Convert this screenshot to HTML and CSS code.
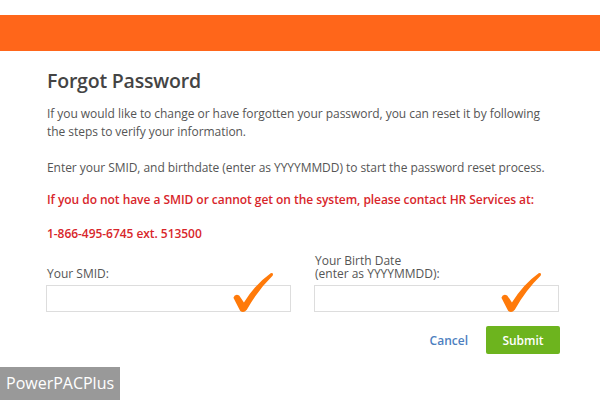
FILE: index.html
```html
<!DOCTYPE html>
<html>
<head>
<meta charset="utf-8">
<link rel="stylesheet" href="styles.css">
</head>
<body>
<div class="topbar"></div>
<main class="panel">
  <h1 class="title">Forgot Password</h1>
  <p class="text">If you would like to change or have forgotten your password, you can reset it by following the steps to verify your information.</p>
  <p class="text">Enter your SMID, and birthdate (enter as YYYYMMDD) to start the password reset process.</p>
  <p class="alert">If you do not have a SMID or cannot get on the system, please contact HR Services at:</p>
  <p class="alert">1-866-495-6745 ext. 513500</p>
  <div class="fields">
    <div class="field">
      <label class="label">Your SMID:</label>
      <div class="inputwrap">
        <input class="input" type="text">
        <svg class="check" viewBox="0 0 44 44"><path d="M1.5,27 Q3,22.5 7.5,24.5 Q10,28 12.5,32 Q24,13 40.5,1.2 Q44,0.5 42.5,4 Q27,19 15.5,39.5 Q12,44 8.5,40.5 Q5,34 1.5,27 Z"/></svg>
      </div>
    </div>
    <div class="field">
      <label class="label">Your Birth Date<br>(enter as YYYYMMDD):</label>
      <div class="inputwrap">
        <input class="input" type="text">
        <svg class="check" viewBox="0 0 44 44"><path d="M1.5,27 Q3,22.5 7.5,24.5 Q10,28 12.5,32 Q24,13 40.5,1.2 Q44,0.5 42.5,4 Q27,19 15.5,39.5 Q12,44 8.5,40.5 Q5,34 1.5,27 Z"/></svg>
      </div>
    </div>
  </div>
  <div class="actions">
    <a class="cancel">Cancel</a>
    <button class="submit">Submit</button>
  </div>
</main>
<div class="brand">PowerPACPlus</div>
</body>
</html>
```
FILE: styles.css
```css
html, body {
  margin: 0;
  padding: 0;
  background: #fff;
  font-family: "Open Sans", "Liberation Sans", sans-serif;
  width: 600px;
  height: 400px;
  overflow: hidden;
  position: relative;
}
.topbar {
  margin-top: 15px;
  height: 36px;
  background: #ff661a;
}
.panel {
  margin-left: 46px;
  width: 514px;
  padding-top: 17px;
}
.title {
  margin: 0 0 0 1px;
  font-size: 19.5px;
  letter-spacing: -0.2px;
  line-height: 26px;
  font-weight: 600;
  color: #444;
}
.text {
  margin: 11px 0 0 1px;
  max-width: 505px;
  font-size: 12px;
  letter-spacing: -0.05px;
  line-height: 18px;
  color: #555;
}
.text + .text { margin-top: 18px; }
.alert {
  margin: 14px 0 0 1px;
  font-size: 12px;
  letter-spacing: -0.05px;
  line-height: 18px;
  font-weight: 600;
  color: #d8262b;
}
.alert + .alert { margin-top: 16px; }
.fields {
  display: flex;
  gap: 23px;
  margin-top: 11px;
}
.field {
  width: 245px;
  display: flex;
  flex-direction: column;
  justify-content: flex-end;
}
.label {
  font-size: 12px;
  line-height: 13px;
  color: #555;
  margin-left: 1px;
  margin-bottom: 5px;
}
.inputwrap { position: relative; }
.input {
  box-sizing: border-box;
  width: 245px;
  height: 27px;
  border: 1px solid #ddd;
  margin: 0;
  display: block;
  background: #fff;
}
.check {
  position: absolute;
  left: 186px;
  top: -13px;
  width: 42px;
  height: 42px;
  fill: #ff7a0a;
}
.actions {
  display: flex;
  justify-content: flex-end;
  align-items: center;
  gap: 18px;
  margin-top: 14px;
}
.cancel {
  color: #4d7fbf;
  font-size: 12px;
  font-weight: 600;
}
.submit {
  width: 74px;
  height: 28px;
  border: 0;
  border-radius: 2px;
  background: #6db41e;
  color: #fff;
  font-family: "Open Sans", "Liberation Sans", sans-serif;
  font-size: 12px;
  font-weight: 600;
  padding: 0;
}
.brand {
  position: absolute;
  left: 0;
  top: 367px;
  width: 120px;
  height: 33px;
  background: #999;
  color: #fff;
  font-size: 16px;
  line-height: 33px;
  padding-left: 6px;
  box-sizing: border-box;
}
```
